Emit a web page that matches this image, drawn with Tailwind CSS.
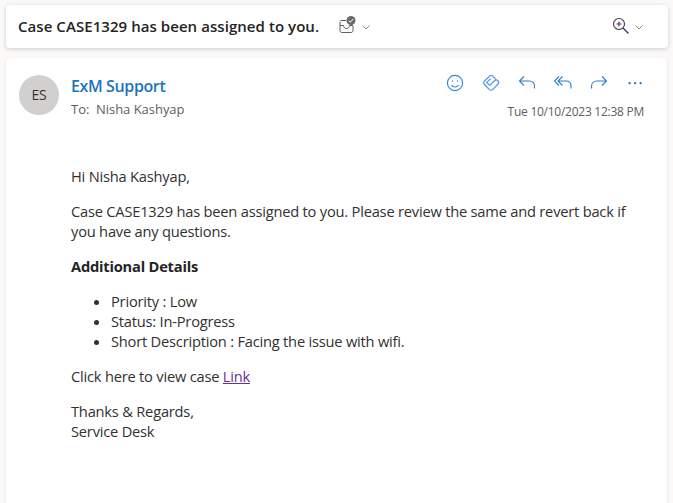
<!DOCTYPE html>
<html>
<head>
<meta charset="utf-8">
<script src="https://cdn.jsdelivr.net/npm/@tailwindcss/browser@4"></script>
</head>
<body class="w-[673px] h-[503px] overflow-hidden bg-[#faf9f8] font-['Open_Sans',sans-serif] text-[#242424]">
<div class="flex flex-col pl-[6px] pr-[5px] pt-[5px]">
  <header class="h-[43px] bg-white rounded-[4px] shadow-[0_1px_4px_rgba(0,0,0,0.18)] flex items-center pl-[12px] pr-[23px]">
    <h1 class="text-[15px] font-semibold tracking-[0.06px] whitespace-nowrap">Case CASE1329 has been assigned to you.</h1>
    <svg class="ml-[18px] mt-[-3px]" width="20" height="20" viewBox="0 0 20 20" fill="none">
      <path d="M3.500 5.500H9M3 6.500V15.500C3 16.600 3.800 17.500 5 17.500H14C15.200 17.500 16 16.600 16 15.500V11" stroke="#605e5c" stroke-width="1"/>
      <path d="M3 10.500H6.500C6.500 12 7.500 13.500 9.500 13.500C11.500 13.500 12.500 12 12.500 10.500H16" stroke="#605e5c" stroke-width="1"/>
      <circle cx="14" cy="5.500" r="4.500" fill="#6b6a68"/>
      <path d="M11.800 5.800L13.400 7.200L16.200 4" stroke="#fff" stroke-width="1"/>
    </svg>
    <svg class="ml-[3px]" width="12" height="12" viewBox="0 0 12 12" fill="none"><path d="M2.500 4.500L6 8L9.500 4.500" stroke="#8a8886" stroke-width="1"/></svg>
    <div class="ml-auto flex items-center gap-[3px]">
      <svg class="mt-[-2px]" width="18" height="18" viewBox="0 0 18 18" fill="none">
        <circle cx="7" cy="7" r="5.500" stroke="#3b3a39" stroke-width="1.100"/>
        <path d="M11 11L16.500 16.500" stroke="#1f3a6e" stroke-width="1.200"/>
        <path d="M4.500 7H9.500M7 4.500V9.500" stroke="#5c1f70" stroke-width="1.100"/>
      </svg>
      <svg width="12" height="12" viewBox="0 0 12 12" fill="none"><path d="M2.500 4.500L6 8L9.500 4.500" stroke="#8a8886" stroke-width="1"/></svg>
    </div>
  </header>

  <main class="mt-[10px] mr-[1px] h-[460px] bg-white rounded-[4px] shadow-[0_1px_3px_rgba(0,0,0,0.12)]">
    <section class="flex pl-[13px] pr-[23px] pt-[17px]">
      <div class="w-[40px] h-[40px] shrink-0 rounded-full bg-[#d2d0ce] flex items-center justify-center text-[14px] font-medium leading-[18px] pb-[1px] text-[#323130] tracking-[-0.3px]">ES</div>
      <div class="ml-[12px] mt-[-1px]">
        <div class="text-[16px] leading-[24px] font-semibold text-[#1b75bc] tracking-[-0.38px]">ExM Support</div>
        <div class="text-[13px] leading-[20px] mt-[1px] text-[#605e5c] tracking-[-0.03px] whitespace-pre">To:  Nisha Kashyap</div>
      </div>
      <div class="ml-auto flex flex-col items-end">
        <div class="flex items-center h-[20px] mt-[-2px] mr-[-1px] gap-[16px]">
          <svg width="20" height="20" viewBox="0 0 20 20" fill="none" stroke="#2f86d6" stroke-width="1.100">
            <circle cx="10" cy="10" r="7.600"/>
            <circle cx="7.400" cy="8" r="0.700" fill="#2f86d6" stroke="none"/>
            <circle cx="12.600" cy="8" r="0.700" fill="#2f86d6" stroke="none"/>
            <path d="M6.500 12C7.300 13.400 8.500 14 10 14C11.500 14 12.700 13.400 13.500 12"/>
          </svg>
          <svg width="20" height="20" viewBox="0 0 20 20" fill="none" stroke="#5b9bef" stroke-width="1.300">
            <path d="M8.500 3.200L3.200 8.300C2.400 9.200 2.400 10.400 3.200 11.300L8.200 16.400C9.200 17.400 10.800 17.400 11.800 16.400L16.900 11.300C17.800 10.300 17.800 8.700 16.900 7.800C15.900 6.800 14.400 6.800 13.500 7.700L8.800 12.400L5.800 9.400L9.600 5.700"/>
            <path d="M8.500 3.200C9.500 2.300 11 2.300 12 3.200L14.300 5.600C14.800 6.100 14.800 6.600 14.500 7"/>
          </svg>
          <svg width="20" height="20" viewBox="0 0 20 20" fill="none" stroke="#2f7fc9" stroke-width="1.100">
            <path d="M7 3.500L2.500 8L7 12.500M2.500 8H12.500C15.500 8 17.500 10 17.500 13.500V15.500"/>
          </svg>
          <svg width="20" height="20" viewBox="0 0 20 20" fill="none" stroke="#2f7fc9" stroke-width="1.100">
            <path d="M6 3.500L1.500 8L6 12.500M9.500 3.500L5 8L9.500 12.500M5 8H13C16 8 18 10 18 13V15.500"/>
          </svg>
          <svg width="20" height="20" viewBox="0 0 20 20" fill="none" stroke="#2f7fc9" stroke-width="1.100">
            <path d="M13 3.500L17.500 8L13 12.500M17.500 8H8C4.500 8 2.500 10.500 2.500 13.500V15.500"/>
          </svg>
          <svg width="20" height="20" viewBox="0 0 20 20" fill="#1f72c0">
            <rect x="3.500" y="9" width="2.200" height="2.200" rx="1"/>
            <rect x="9" y="9" width="2.200" height="2.200" rx="1"/>
            <rect x="14.500" y="9" width="2.200" height="2.200" rx="1"/>
          </svg>
        </div>
        <div class="text-[12px] leading-[16px] mt-[11px] text-[#605e5c] tracking-[-0.26px] whitespace-nowrap">Tue 10/10/2023 12:38 PM</div>
      </div>
    </section>
    <article class="pl-[65px] pr-[20px] pt-[46px] text-[14.67px] leading-[20px] tracking-[-0.21px] text-[#323130]">
      <p class="mb-[15px]">Hi Nisha Kashyap,</p>
      <p class="mb-[15px] w-[570px]">Case CASE1329 has been assigned to you. Please review the same and revert back if you have any questions.</p>
      <p class="mb-[15px] font-bold text-[#242424]">Additional Details</p>
      <ul class="mb-[15px] list-disc pl-[40px]">
        <li>Priority : Low</li>
        <li>Status: In-Progress</li>
        <li>Short Description : Facing the issue with wifi.</li>
      </ul>
      <p class="mb-[15px]">Click here to view case <a class="underline text-[#6b2f94]" href="#">Link</a></p>
      <p>Thanks &amp; Regards,<br>Service Desk</p>
    </article>
  </main>
</div>
</body>
</html>
